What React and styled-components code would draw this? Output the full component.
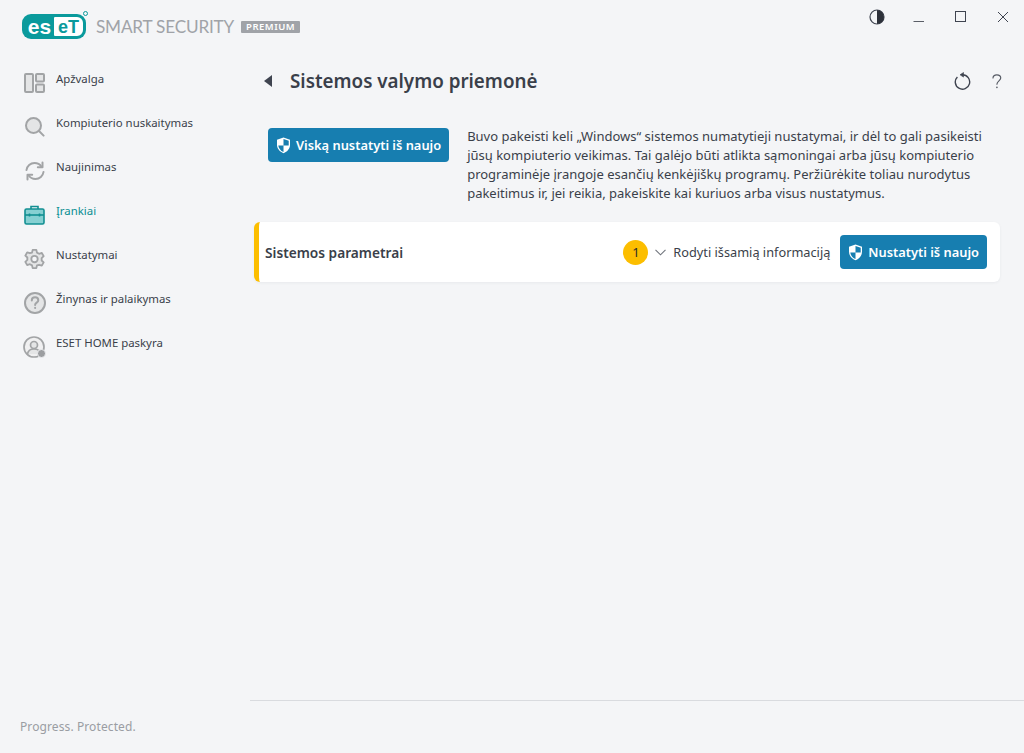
import React from 'react';
import styled, { createGlobalStyle } from 'styled-components';

const GlobalStyle = createGlobalStyle`
    html, body {
        margin: 0;
        padding: 0;
        background: #f4f5f7;
    }
    * {
        box-sizing: border-box;
    }
`;

const Page = styled.div`
    width: 1024px;
    height: 753px;
    display: flex;
    flex-direction: column;
    overflow: hidden;
    background: #f4f5f7;
    color: #3a3f4a;
    font-family: "Noto Sans", "Open Sans", sans-serif;
`;

const TitleBar = styled.div`
    height: 50px;
    flex: none;
    display: flex;
    align-items: flex-start;
    justify-content: space-between;
    padding: 12px 0 0 22px;
`;

const Brand = styled.div`
    display: flex;
    align-items: center;
    height: 29px;
`;

const LogoPill = styled.div`
    position: relative;
    width: 64px;
    height: 25px;
    border-radius: 9px;
    background: #0a9a9c;
    display: flex;
    align-items: center;
    padding: 3px;
`;

const LogoDark = styled.span`
    width: 29px;
    height: 19px;
    display: flex;
    align-items: center;
    justify-content: center;
    color: #fff;
    font-family: "Liberation Sans", sans-serif;
    font-weight: 700;
    font-size: 21px;
    line-height: 1;
`;

const LogoLight = styled.span`
    flex: 1;
    height: 19px;
    border-radius: 1px 6px 6px 1px;
    background: #fff;
    display: flex;
    align-items: center;
    justify-content: center;
    color: #0a9a9c;
    font-family: "Liberation Sans", sans-serif;
    font-weight: 700;
    font-size: 18px;
    line-height: 1;
`;

const LogoMark = styled.span`
    position: absolute;
    top: -3px;
    right: -2px;
    width: 5px;
    height: 5px;
    border: 1px solid #0a9a9c;
    border-radius: 50%;
`;

const ProductName = styled.span`
    margin-left: 10px;
    font-family: "Lato", sans-serif;
    font-size: 17.2px;
    color: #a0a3a8;
    letter-spacing: -0.2px;
    white-space: nowrap;
`;

const Edition = styled.span`
    margin-left: 7px;
    height: 12px;
    width: 59px;
    background: #a0a3a8;
    border-radius: 1px;
    color: #fff;
    font-size: 9.5px;
    font-weight: 600;
    line-height: 12px;
    text-align: center;
    letter-spacing: 0.5px;
`;

const WindowControls = styled.div`
    display: flex;
    align-items: center;
    margin-top: -11px;
`;

const WindowButton = styled.div`
    width: 42px;
    height: 32px;
    display: flex;
    align-items: center;
    justify-content: center;
`;

const Body = styled.div`
    flex: 1;
    display: flex;
    min-height: 0;
`;

const Sidebar = styled.nav`
    width: 250px;
    flex: none;
    display: flex;
    flex-direction: column;
    padding-top: 11px;
`;

const NavRow = styled.div`
    height: 44px;
    display: flex;
    align-items: flex-start;
    padding-left: 23px;
    color: ${props => props.$active ? '#0a8f93' : '#3a3f4a'};
`;

const NavIcon = styled.span`
    width: 23px;
    height: 24px;
    margin-top: 10px;
    flex: none;
    display: flex;
    align-items: center;
    justify-content: center;
`;

const NavLabel = styled.span`
    margin-left: 10px;
    margin-top: 9px;
    font-size: 11.4px;
    line-height: 18px;
`;

const Slogan = styled.div`
    margin-top: auto;
    padding: 0 0 17px 20px;
    font-size: 12px;
    line-height: 18px;
    letter-spacing: 0.1px;
    color: #9a9da3;
`;

const Main = styled.main`
    flex: 1;
    display: flex;
    flex-direction: column;
    min-width: 0;
`;

const Content = styled.div`
    flex: 1;
    padding: 0 24px 0 4px;
`;

const PageHeader = styled.div`
    height: 62px;
    display: flex;
    align-items: center;
`;

const BackArrow = styled.span`
    width: 0;
    height: 0;
    margin-left: 10px;
    border-style: solid;
    border-width: 6px 8px 6px 0;
    border-color: transparent #3f4450 transparent transparent;
`;

const PageTitle = styled.h1`
    margin: 0 0 0 18px;
    flex: 1;
    font-size: 18.8px;
    line-height: 28px;
    font-weight: 600;
    color: #3a3f4a;
`;

const HeaderTools = styled.div`
    display: flex;
    align-items: center;
    gap: 21px;
    margin-right: -2px;
`;

const Intro = styled.div`
    display: flex;
    align-items: flex-start;
    gap: 18px;
    margin-top: 16px;
    padding-left: 14px;
`;

const Description = styled.p`
    margin: -1px 0 0;
    width: 525px;
    font-size: 13px;
    line-height: 19px;
    color: #3a3f4a;
`;

const ActionButton = styled.button`
    height: 34px;
    flex: none;
    display: inline-flex;
    align-items: center;
    gap: 5px;
    padding: 0 8px;
    border: 0;
    border-radius: 4px;
    background: #177eb0;
    color: #fff;
    font-family: inherit;
    font-size: 12.85px;
    font-weight: 600;
    white-space: nowrap;
`;

const Card = styled.section`
    margin-top: 19px;
    height: 60px;
    display: flex;
    align-items: center;
    padding: 0 13px 0 6px;
    background: #fff;
    border-left: 5px solid #fcbe00;
    border-radius: 6px;
    box-shadow: 0 1px 3px rgba(40, 50, 70, 0.06);
`;

const CardTitle = styled.div`
    flex: 1;
    font-size: 13.7px;
    font-weight: 600;
    color: #3a3f4a;
`;

const Badge = styled.span`
    width: 25px;
    height: 25px;
    border-radius: 50%;
    background: #fcbe00;
    color: #2b2b2b;
    display: flex;
    align-items: center;
    justify-content: center;
    font-size: 13px;
`;

const DetailsToggle = styled.div`
    display: flex;
    align-items: center;
    gap: 7px;
    margin: 0 10px 0 7px;
    font-size: 12.75px;
    color: #3a3f4a;
`;

const FooterBar = styled.div`
    height: 53px;
    flex: none;
    border-top: 1px solid #d9dbdf;
`;

const DashboardIcon = () => (
    <svg width="21" height="20" viewBox="0 0 21 20" fill="#e4e5e6" stroke="#a2a4a6" strokeWidth="2">
        <rect x="1" y="1" width="8" height="18" rx="1" />
        <rect x="12" y="1" width="8" height="7.5" rx="1" />
        <rect x="12" y="11.5" width="8" height="7.5" rx="1" />
    </svg>
);

const SearchIcon = () => (
    <svg width="20" height="20" viewBox="0 0 20 20" fill="#e4e5e6" stroke="#a2a4a6" strokeWidth="2" strokeLinecap="round">
        <circle cx="8.5" cy="8.5" r="7.5" />
        <path d="M14 14l4.6 4.6" fill="none" />
    </svg>
);

const RefreshIcon = () => (
    <svg width="20" height="20" viewBox="0 0 20 20" fill="none" stroke="#a2a4a6" strokeWidth="2" strokeLinecap="round" strokeLinejoin="round">
        <path d="M1.5 9C2 5 5.4 2 9.5 2c3 0 5.5 1.4 7 3.7" />
        <path d="M17.5 1.5v4.7h-4.7" />
        <path d="M18.5 11c-.5 4-3.9 7-8 7-3 0-5.5-1.4-7-3.7" />
        <path d="M2.5 18.5v-4.7h4.7" />
    </svg>
);

const ToolsIcon = () => (
    <svg width="21" height="20" viewBox="0 0 21 20" stroke="#128f92" strokeWidth="1.6">
        <path d="M7 4V1.5h7V4" fill="none" />
        <rect x="1" y="4" width="19" height="15" rx="1.5" fill="#86d0d2" />
        <path d="M1 10h19" fill="none" />
        <path d="M5.5 8.5v3M15.5 8.5v3" fill="none" />
    </svg>
);

const GearIcon = () => (
    <svg width="23" height="22" viewBox="0 0 24 24" fill="#e4e5e6" stroke="#a2a4a6" strokeWidth="2" strokeLinejoin="round">
        <path d="M10 2h4l.7 3 2.3 1.3 3-.9 2 3.500-2.200 2.100v2.600l2.200 2.100-2 3.500-3-.9L14.700 19l-.7 3h-4l-.7-3L7 17.700l-3 .9-2-3.500 2.200-2.100v-2.600L2 8.300l2-3.500 3 .9L9.300 5z" />
        <circle cx="12" cy="12" r="3.5" fill="#f4f5f7" />
    </svg>
);

const HelpCircleIcon = () => (
    <svg width="22" height="22" viewBox="0 0 22 22" fill="#e4e5e6" stroke="#a2a4a6" strokeWidth="2" strokeLinecap="round">
        <circle cx="11" cy="11" r="10" />
        <path d="M7.8 8.5c0-2 1.500-3.200 3.300-3.200s3.200 1.200 3.200 2.900c0 2.400-3.200 2.500-3.200 4.800" fill="none" />
        <path d="M11.100 15.800v.2" fill="none" />
    </svg>
);

const AccountIcon = () => (
    <svg width="23" height="22" viewBox="0 0 23 22" fill="none" stroke="#a2a4a6" strokeWidth="1.7">
        <circle cx="11" cy="11" r="10" fill="#f0f0f1" />
        <circle cx="11" cy="9" r="3.5" fill="#e4e5e6" />
        <path d="M4.5 18c.5-3.500 3-5 6.500-5s6 1.500 6.500 5" fill="#e4e5e6" />
        <circle cx="18.500" cy="17.500" r="4" fill="#9c9ea1" stroke="#f4f5f7" strokeWidth=".8" />
    </svg>
);

const ContrastIcon = () => (
    <svg width="16" height="16" viewBox="0 0 16 16">
        <circle cx="8" cy="8" r="7" fill="#f4f5f7" stroke="#3f4450" strokeWidth="1.2" />
        <path d="M8 1a7 7 0 0 1 0 14z" fill="#2d313a" />
    </svg>
);

const MinimizeIcon = () => (
    <svg width="12" height="12" viewBox="0 0 12 12" stroke="#5a5e67" strokeWidth="1">
        <path d="M.5 10.500h10.500" />
    </svg>
);

const MaximizeIcon = () => (
    <svg width="12" height="12" viewBox="0 0 12 12" fill="none" stroke="#3f4450" strokeWidth="1">
        <rect x=".5" y=".5" width="10" height="10" />
    </svg>
);

const CloseIcon = () => (
    <svg width="12" height="12" viewBox="0 0 12 12" fill="none" stroke="#3f4450" strokeWidth="1">
        <path d="M1 1l10 10M11 1L1 11" />
    </svg>
);

const ReloadIcon = () => (
    <svg width="17" height="18" viewBox="0 0 17 18" fill="none" stroke="#3f4450" strokeWidth="1.4">
        <path d="M8.500 2.800A7.200 7.200 0 1 1 3.400 4.900" />
        <path d="M6 2.800L9.500 .5v4.600z" fill="#3f4450" strokeWidth=".6" />
    </svg>
);

const HelpIcon = () => (
    <svg width="10" height="15" viewBox="0 0 12 18" fill="none" stroke="#555a64" strokeWidth="1.4" strokeLinecap="round">
        <path d="M1.200 4.800C1.300 2.600 3.200 1 5.800 1c2.700 0 4.700 1.600 4.700 3.900 0 3.300-4.600 3.500-4.600 7.400" />
        <path d="M5.900 16v.2" strokeWidth="1.9" />
    </svg>
);

const ShieldIcon = () => (
    <svg width="15" height="17" viewBox="0 0 15 17">
        <path d="M7.500.5l6.500 2.300v5c0 3.900-2.700 6.900-6.500 8.500-3.800-1.600-6.500-4.600-6.500-8.500v-5z" fill="#fff" />
        <path d="M7.500 2v6.500h5.200V3.700zM7.500 8.500H2.300c.2 2.900 2.300 5.200 5.200 6.600z" fill="#177eb0" />
    </svg>
);

const ChevronIcon = () => (
    <svg width="11" height="7" viewBox="0 0 11 7" fill="none" stroke="#70747c" strokeWidth="1.1">
        <path d="M.5.8l5 5 5-5" />
    </svg>
);

const navItems = [
    { label: 'Apžvalga', icon: <DashboardIcon /> },
    { label: 'Kompiuterio nuskaitymas', icon: <SearchIcon /> },
    { label: 'Naujinimas', icon: <RefreshIcon /> },
    { label: 'Įrankiai', icon: <ToolsIcon />, active: true },
    { label: 'Nustatymai', icon: <GearIcon /> },
    { label: 'Žinynas ir palaikymas', icon: <HelpCircleIcon /> },
    { label: 'ESET HOME paskyra', icon: <AccountIcon /> },
];

const App = () => (
    <Page>
        <GlobalStyle />
        <TitleBar>
            <Brand>
                <LogoPill>
                    <LogoDark>es</LogoDark>
                    <LogoLight>eT</LogoLight>
                    <LogoMark />
                </LogoPill>
                <ProductName>SMART SECURITY</ProductName>
                <Edition>PREMIUM</Edition>
            </Brand>
            <WindowControls>
                <WindowButton><ContrastIcon /></WindowButton>
                <WindowButton><MinimizeIcon /></WindowButton>
                <WindowButton><MaximizeIcon /></WindowButton>
                <WindowButton><CloseIcon /></WindowButton>
            </WindowControls>
        </TitleBar>
        <Body>
            <Sidebar>
                {navItems.map(item => (
                    <NavRow key={item.label} $active={item.active}>
                        <NavIcon>{item.icon}</NavIcon>
                        <NavLabel>{item.label}</NavLabel>
                    </NavRow>
                ))}
                <Slogan>Progress. Protected.</Slogan>
            </Sidebar>
            <Main>
                <Content>
                    <PageHeader>
                        <BackArrow />
                        <PageTitle>Sistemos valymo priemonė</PageTitle>
                        <HeaderTools>
                            <ReloadIcon />
                            <HelpIcon />
                        </HeaderTools>
                    </PageHeader>
                    <Intro>
                        <ActionButton><ShieldIcon />Viską nustatyti iš naujo</ActionButton>
                        <Description>
                            Buvo pakeisti keli „Windows“ sistemos numatytieji nustatymai, ir dėl to gali pasikeisti
                            jūsų kompiuterio veikimas. Tai galėjo būti atlikta sąmoningai arba jūsų kompiuterio
                            programinėje įrangoje esančių kenkėjiškų programų. Peržiūrėkite toliau nurodytus
                            pakeitimus ir, jei reikia, pakeiskite kai kuriuos arba visus nustatymus.
                        </Description>
                    </Intro>
                    <Card>
                        <CardTitle>Sistemos parametrai</CardTitle>
                        <Badge>1</Badge>
                        <DetailsToggle><ChevronIcon />Rodyti išsamią informaciją</DetailsToggle>
                        <ActionButton><ShieldIcon />Nustatyti iš naujo</ActionButton>
                    </Card>
                </Content>
                <FooterBar />
            </Main>
        </Body>
    </Page>
);

export default App;
